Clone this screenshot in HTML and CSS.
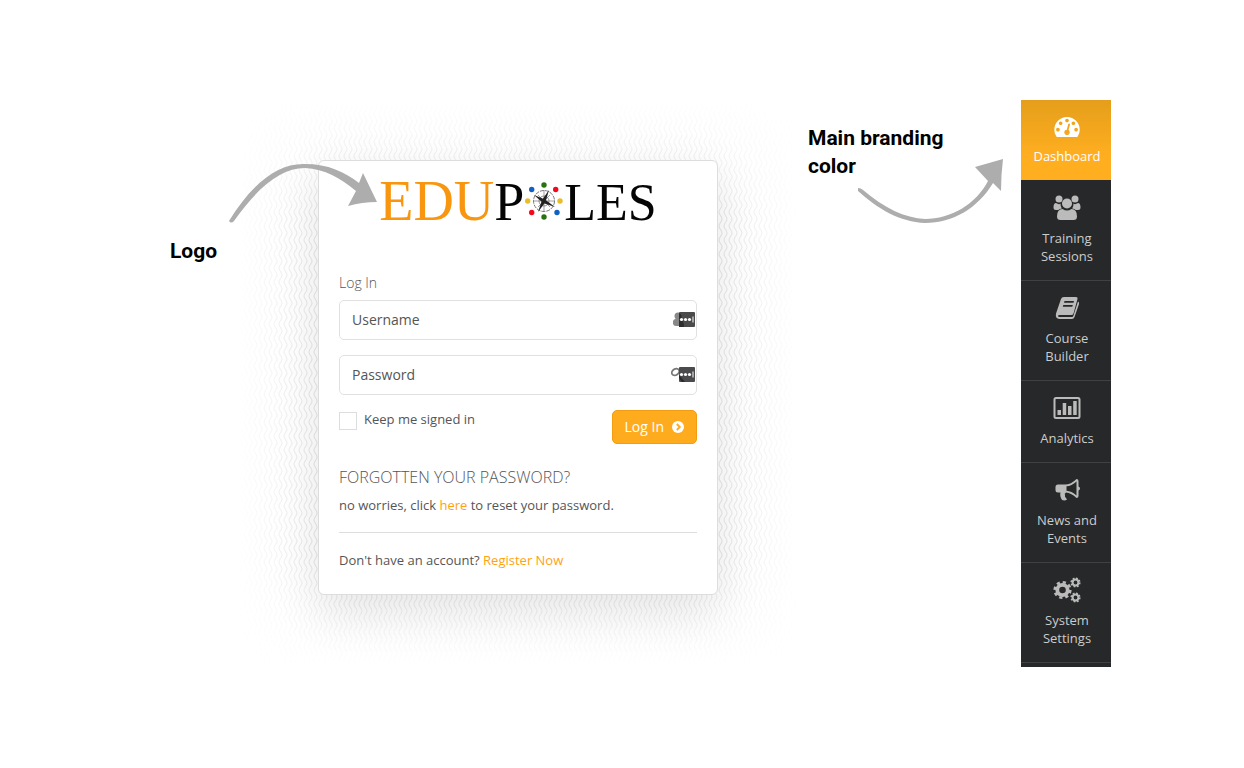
FILE: index.html
```html
<!DOCTYPE html>
<html lang="en">
<head>
<meta charset="utf-8">
<meta name="viewport" content="width=device-width, initial-scale=1">
<title>Edupoles branding</title>
<link rel="stylesheet" href="styles.css">
</head>
<body>
<main class="board">
  <p class="note note-logo">Logo</p>

  <section class="login">
    <svg class="texture" aria-hidden="true">
      <defs>
        <pattern id="waves" width="5" height="14" patternUnits="userSpaceOnUse">
          <path d="M-4 0C-4 3 -1 4 -1 7S-4 11-4 14M1 0C1 3 4 4 4 7S1 11 1 14M6 0C6 3 9 4 9 7S6 11 6 14" fill="none" stroke="#e2e2e2" stroke-width="1.200"/>
        </pattern>
      </defs>
      <rect width="100%" height="100%" fill="url(#waves)"/>
    </svg>
    <div class="card">
      <h1 class="brand" aria-label="Edupoles">
        <span class="brand-accent">EDU</span><span>P</span>
        <svg class="compass" viewBox="0 0 40 40" aria-hidden="true">
          <g fill="none" stroke="#777"><circle cx="20" cy="20" r="10.500" stroke-width="1" stroke-dasharray="4 1"/><circle cx="20" cy="20" r="5" stroke-width=".8"/><path d="M20 9v22M9 20h22M14 14l12 12M26 14L14 26" stroke-width=".7"/></g>
          <path d="M25 9l-3.500 12L14 31l4-12zM10 14l11 4.500L31 26l-12-4z" fill="#222"/>
          <circle cx="20" cy="4" r="2.700" fill="#28720f"/><circle cx="20" cy="36" r="2.700" fill="#28720f"/>
          <circle cx="7.700" cy="8.500" r="2.700" fill="#1260c4"/><circle cx="33" cy="31.500" r="2.700" fill="#1260c4"/>
          <circle cx="31.700" cy="8.500" r="2.700" fill="#f5081b"/><circle cx="7.700" cy="31.500" r="2.700" fill="#f5081b"/>
          <circle cx="3.700" cy="20" r="2.700" fill="#e8bd2a"/><circle cx="36" cy="20" r="2.700" fill="#e8bd2a"/>
        </svg>
        <span class="brand-end">LES</span>
      </h1>
      <form class="form">
        <h2 class="form-title">Log In</h2>
        <div class="field">
          <input class="input" type="text" placeholder="Username" aria-label="Username">
          <svg class="field-icon" viewBox="0 0 24 16" aria-hidden="true">
            <circle cx="7" cy="4" r="3.500" fill="#888"/><rect x="2" y="7" width="9" height="7" rx="3" fill="#888"/>
            <rect x="8" width="16" height="15" rx="1" fill="#4b4b4d"/><path d="M8 1q4 2 2 6 3 2 3 8H8z" fill="#2d2d2f"/>
            <g fill="#fff"><circle cx="10.500" cy="7.500" r="1.600"/><circle cx="14.500" cy="7.500" r="1.600"/><circle cx="18.500" cy="7.500" r="1.600"/><path d="M21.500 4.500h1v6h-1z"/></g>
          </svg>
        </div>
        <div class="field">
          <input class="input" type="password" placeholder="Password" aria-label="Password">
          <svg class="field-icon" viewBox="0 0 24 16" aria-hidden="true">
            <ellipse cx="4.500" cy="5" rx="4" ry="3" transform="rotate(-35 4.500 5)" fill="none" stroke="#777" stroke-width="1.800"/>
            <rect x="8" width="16" height="15" rx="1" fill="#4b4b4d"/><path d="M8 8l6 7h-3l-3-4z" fill="#29292b"/>
            <g fill="#fff"><circle cx="10.500" cy="7.500" r="1.600"/><circle cx="14.500" cy="7.500" r="1.600"/><circle cx="18.500" cy="7.500" r="1.600"/><path d="M21.500 4.500h1v6h-1z"/></g>
          </svg>
        </div>
        <div class="actions">
          <label class="remember"><input class="checkbox" type="checkbox"><span>Keep me signed in</span></label>
          <button class="submit" type="submit">Log In
            <svg class="submit-icon" viewBox="0 0 12 12" aria-hidden="true"><circle cx="6" cy="6" r="6" fill="#fff"/><path d="M4.800 3l3 3-3 3" fill="none" stroke="#ffab1e" stroke-width="1.900"/></svg>
          </button>
        </div>
      </form>
      <h2 class="forgot-title">FORGOTTEN YOUR PASSWORD?</h2>
      <p class="forgot-text">no worries, click <a class="link" href="#reset">here</a> to reset your password.</p>
      <p class="register">Don't have an account? <a class="link" href="#register">Register Now</a></p>
    </div>
    <svg class="arrow arrow-logo" viewBox="226 160 154 66" aria-hidden="true">
      <path d="M229 221C251 185 277 163 305 164C328 164 345 172 359 183L363 173L377 202Q362 202 348 206L356 191C340 178 325 169 305 168C281 168 258 187 234 221Q231 224 229 221Z"/>
    </svg>
  </section>

  <div class="note note-color">
    <p class="note-text">Main branding color</p>
    <svg class="arrow arrow-color" viewBox="856 156 150 70" aria-hidden="true">
      <path d="M858 188Q861 188 863 190C884 208 905 218 925 219C951 219 976 204 988 181L975 167L1003 159Q1001 175 1001 191L993 183C978 208 953 223 925 223C900 222 878 209 858 191Z"/>
    </svg>
  </div>

  <nav class="sidebar" aria-label="Main">
    <a class="item item-active" href="#dashboard">
      <svg class="icon" viewBox="-91 -90 1972 1972" aria-hidden="true"><path d="M384 1152q0-53-37.500-90.500t-90.500-37.500-90.500 37.500-37.500 90.500 37.500 90.500 90.500 37.500 90.500-37.500 37.500-90.500zm192-448q0-53-37.500-90.500t-90.500-37.500-90.500 37.500-37.500 90.500 37.500 90.500 90.500 37.500 90.500-37.500 37.500-90.500zm428 481l101-382q6-26-7.500-48.500t-38.500-29.500-48 6.500-30 39.500l-101 382q-60 5-107 43.500t-63 98.500q-20 77 20 146t117 89 146-20 89-117q16-60-6-117t-72-91zm660-33q0-53-37.500-90.500t-90.500-37.500-90.500 37.500-37.500 90.500 37.500 90.500 90.500 37.500 90.500-37.500 37.500-90.500zm-640-640q0-53-37.500-90.500t-90.500-37.500-90.500 37.500-37.500 90.500 37.500 90.500 90.500 37.500 90.500-37.500 37.500-90.500zm448 192q0-53-37.500-90.500t-90.500-37.500-90.500 37.500-37.500 90.500 37.500 90.500 90.500 37.500 90.500-37.500 37.500-90.500zm320 448q0 261-141 483-19 29-54 29h-1402q-35 0-54-29-141-221-141-483 0-182 71-348t191-286 286-191 348-71 348 71 286 191 191 286 71 348z"/></svg>
      <span>Dashboard</span>
    </a>
    <a class="item" href="#training">
      <svg class="icon" viewBox="0 0 28 28" aria-hidden="true"><circle cx="6" cy="5" r="3.500"/><circle cx="22" cy="5" r="3.500"/><path d="M3 9q3 2 4.500.500Q7.300 12 8.800 14.500q-2.300 0-3.500 1.500H3Q.500 16 .500 13.500 .500 9 3 9zM25 9q-3 2-4.500.500Q20.700 12 19.200 14.500q2.300 0 3.500 1.500H25q2.500 0 2.500-2.500Q27.500 9 25 9z"/><circle cx="14" cy="9.500" r="5"/><path d="M9.500 15q4.500 3 9 0Q24 15 24 22.500q0 3.500-3.500 3.500h-13Q4 26 4 22.500 4 15 9.500 15z"/></svg>
      <span>Training<br>Sessions</span>
    </a>
    <a class="item" href="#courses">
      <svg class="icon" viewBox="0 0 28 28" aria-hidden="true"><path fill-rule="evenodd" d="M11 3h12q2 0 1.500 2L20.500 19.500q-.500 1.500-2.500 1.500H6.500Q5 21 5 22t1.500 1H19q1 0 1.500-1.500l4.500-14Q26.500 8 26 10l-4.500 13q-.700 2-2.500 2H6.500Q2 24.500 3 19.500L8 5Q8.500 3 11 3zM11.500 7l-.500 1.700h9.500L21 7zM10.300 11l-.500 1.700h9.500l.500-1.700z"/></svg>
      <span>Course<br>Builder</span>
    </a>
    <a class="item" href="#analytics">
      <svg class="icon" viewBox="0 0 28 28" aria-hidden="true"><path fill-rule="evenodd" d="M3 3h22q2.500 0 2.500 2.500v17Q27.500 25 25 25H3Q.500 25 .500 22.500v-17Q.500 3 3 3zm0 2q-.500 0-.500.500v17q0 .500.500.500h22q.500 0 .500-.500v-17q0-.500-.500-.500zM4.500 16h3.500v5H4.500zM9.700 9h3.500v12H9.700zM15 12h3.500v9H15zM20.200 7h3.500v14h-3.500z"/></svg>
      <span>Analytics</span>
    </a>
    <a class="item" href="#news">
      <svg class="icon" viewBox="0 0 28 28" aria-hidden="true"><path fill-rule="evenodd" d="M25.500 10.500q1.500.500 1.500 2t-1.500 2V20q0 2-2 2-5-5-10.500-5.500-2 1-1 2.800-.500 1.700 1 2.700l1 1.500q-2 1.500-5 .500-2.500-4-1.500-7.500H5Q2.500 16.500 2.500 14v-3Q2.500 8.500 5 8.500h7Q18 8.500 23.500 3q2 0 2 2zM23.500 5.500Q18.500 10 13.500 10.300v4.400q5 .300 10 4.800z"/></svg>
      <span>News and<br>Events</span>
    </a>
    <a class="item" href="#settings">
      <svg class="icon" viewBox="0 0 28 28" aria-hidden="true">
        <g class="gear"><circle cx="9.500" cy="14" r="5.200" stroke-width="3.800"/><circle cx="9.500" cy="14" r="7.800" stroke-width="2.600" stroke-dasharray="3.200 2.926"/><circle cx="22.500" cy="6.500" r="2.900" stroke-width="2"/><circle cx="22.500" cy="6.500" r="4.300" stroke-width="1.600" stroke-dasharray="1.800 1.577"/><circle cx="22.500" cy="21.500" r="2.900" stroke-width="2"/><circle cx="22.500" cy="21.500" r="4.300" stroke-width="1.600" stroke-dasharray="1.800 1.577"/></g>
      </svg>
      <span>System<br>Settings</span>
    </a>
  </nav>
</main>
</body>
</html>
```
FILE: styles.css
```css
* { box-sizing: border-box; }
body { margin: 0; background: #fff; color: #555; font-family: "Open Sans", sans-serif; font-size: 13px; line-height: 18px; }
h1, h2, p { margin: 0; }
h1, h2 { font-weight: 400; }
a { color: inherit; text-decoration: none; }

.board { display: grid; grid-template-columns: 148px minmax(0, 400px) 1fr 90px; align-items: start; padding: 100px 133px 100px 170px; }

.note { color: #000; font-family: Roboto, sans-serif; font-size: 21px; font-weight: 700; line-height: 28px; }
.note-logo { padding-top: 137px; }
.note-color { position: relative; margin: 24px 0 0 90px; }
.note-text { max-width: 160px; }
.arrow { position: absolute; fill: #adadad; }
.arrow-logo { left: -92px; top: 0; width: 154px; height: 66px; }
.arrow-color { left: 48px; top: 32px; width: 150px; height: 70px; }

.login { position: relative; margin-top: 60px; }
.texture {
  position: absolute; left: -80px; top: -60px; width: calc(100% + 160px); height: calc(100% + 130px);
  -webkit-mask-image: linear-gradient(to right, transparent, #000 100px, #000 calc(100% - 100px), transparent), linear-gradient(transparent, #000 120px, #000 calc(100% - 110px), transparent);
  -webkit-mask-composite: source-in;
  mask-composite: intersect;
}
.card { position: relative; padding: 10px 20px 25px; border: 1px solid #ddd; border-radius: 6px; background: #fff; box-shadow: 0 16px 48px rgba(0, 0, 0, .1); }

.brand { display: flex; justify-content: center; align-items: baseline; height: 60px; color: #050505; font-family: "Liberation Serif", serif; font-size: 54px; line-height: 60px; }
.brand-accent { color: #f8960f; font-size: 56px; }
.brand-end { font-size: 52px; }
.compass { align-self: center; width: 40px; height: 40px; flex: none; }

.form-title { margin-top: 42px; font-size: 14px; font-weight: 300; line-height: 20px; }
.field { position: relative; margin: 7px 0 15px; }
.input { display: block; width: 100%; height: 40px; padding: 0 36px 2px 12px; border: 1px solid #e1e1e1; border-radius: 5px; background: #fff; color: #555; font: 14px/20px "Open Sans", sans-serif; }
.input::placeholder { color: #555; opacity: 1; }
.field-icon { position: absolute; right: 2px; top: 12px; width: 24px; height: 16px; overflow: visible; }
.actions { display: flex; justify-content: space-between; align-items: flex-start; }
.remember { display: flex; gap: 7px; }
.checkbox { appearance: none; width: 18px; height: 18px; margin: 2px 0 0; border: 1px solid #ddd; background: #fff; }
.submit { display: flex; align-items: center; gap: 8px; height: 34px; padding: 0 12px; border: 1px solid #f39c11; border-radius: 5px; background: #ffab1e; color: #fff; font: 14px/20px "Open Sans", sans-serif; }
.submit-icon { width: 12px; height: 12px; }
.forgot-title { margin-top: 22px; font-size: 16px; font-weight: 300; line-height: 22px; }
.forgot-text { margin-top: 8px; padding-bottom: 18px; border-bottom: 1px solid #ddd; }
.register { margin-top: 18px; }
.link { color: #ffa20f; }

.sidebar { padding-bottom: 4px; background: #272829; color: #ccc; }
.item { display: flex; flex-direction: column; align-items: center; gap: 7px; padding: 13px 0 15px 2px; border-top: 1px solid #404142; text-align: center; }
.item:last-child { border-bottom: 1px solid #404142; }
.item-active { padding-top: 12px; border: 0; background: linear-gradient(#e59e1b, #ffae20 70%); color: #fff; }
.item-active + .item { border-top-color: transparent; }
.icon { width: 28px; height: 28px; fill: #bbb; }
.item-active .icon { fill: #fff; }
.gear { fill: none; stroke: #bbb; }
```
